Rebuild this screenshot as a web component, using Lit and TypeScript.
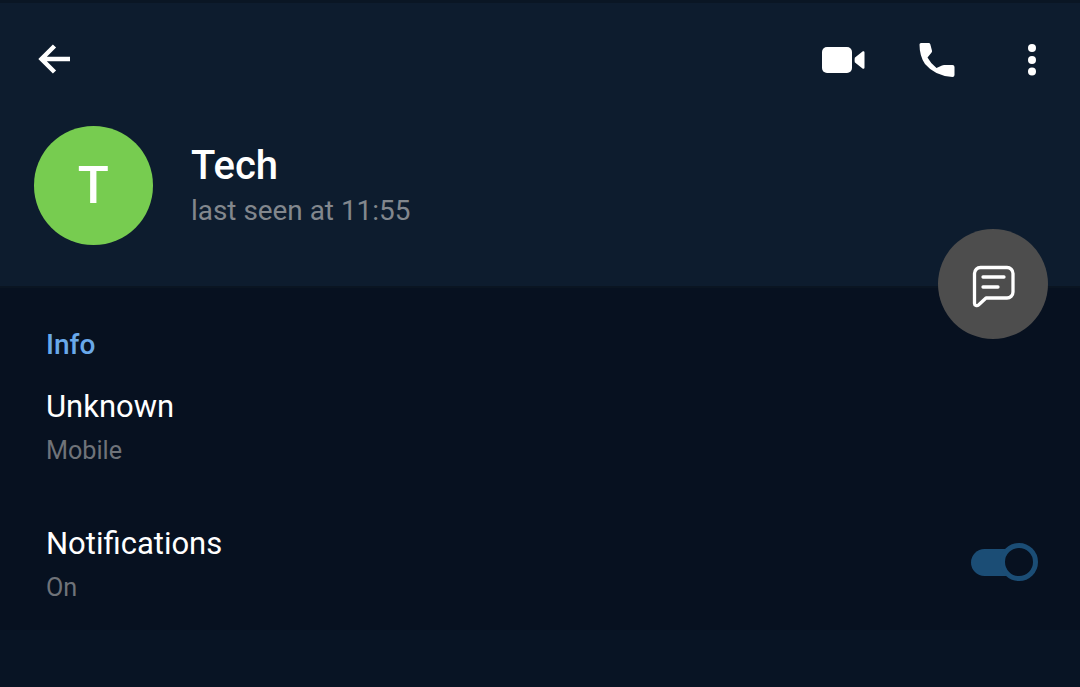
import { LitElement, html, css } from "lit";
import { customElement } from "lit/decorators.js";

@customElement("app-root")
export class AppRoot extends LitElement {
  static styles = css`
    :host { display: block; width: 1080px; height: 687px; overflow: hidden; background: #071120; font-family: Roboto, "Noto Sans", sans-serif; color: #fff; position: relative; }
    * { box-sizing: border-box; }
    .page { display: flex; flex-direction: column; height: 687px; }
    .strip { height: 3px; background: #0a1624; }
    .header { height: 285px; background: #0d1c2e; padding: 0 34px; display: flex; flex-direction: column; border-bottom: 2px solid #0a1522; }
    .toolbar { height: 114px; display: flex; align-items: center; }
    .back { width: 36px; height: 36px; margin-left: 2px; }
    .spacer { flex: 1; }
    .actions { display: flex; align-items: center; }
    .video { width: 44px; height: 28px; }
    .phone { width: 38px; height: 38px; margin-left: 53px; }
    .more { width: 12px; height: 34px; margin-left: 70px; margin-right: 8px; }
    .profile { display: flex; align-items: center; gap: 38.500px; margin-top: 9px; }
    .avatar { width: 118.500px; height: 118.500px; border-radius: 50%; background: #77cc50; display: flex; align-items: center; justify-content: center; font-size: 51px; font-weight: 500; }
    .name { font-size: 40px; font-weight: 500; line-height: 46px; margin-top: 1px; }
    .seen { font-size: 27.900px; line-height: 34px; color: #82878d; margin-top: 5px; }
    .content { height: 342px; padding: 40px 46px 0; background: #071120; }
    .section { font-size: 28px; font-weight: 500; color: #69a9ea; line-height: 34px; }
    .row { display: flex; align-items: center; justify-content: space-between; }
    .title { font-size: 31px; line-height: 38px; }
    .sub { font-size: 25.200px; line-height: 32px; color: #6f7379; margin-top: 9px; }
    .r1 { margin-top: 26px; }
    .r2 { margin-top: 58px; }
    .toggle { position: relative; width: 68px; height: 40px; margin-right: -4px; top: -3px; }
    .track { position: absolute; left: 1px; top: 7px; width: 50px; height: 27px; border-radius: 14px; background: #1b4d75; }
    .knob { position: absolute; right: 0; top: 1px; width: 38px; height: 38px; border-radius: 50%; background: #071120; border: 5px solid #1b4d75; }
    .footer { flex: 1; background: #081424; }
    .fab { position: absolute; left: 938px; top: 229px; width: 110px; height: 110px; border-radius: 50%; background: #4d4d4d; display: flex; align-items: center; justify-content: center; }
    .fab svg { width: 48px; height: 48px; }
  `;

  render() {
    return html`
      <div class="page">
        <div class="strip"></div>
        <div class="header">
          <div class="toolbar">
            <svg class="back" viewBox="0 0 36 36" fill="none" stroke="#fff" stroke-width="4.500"><path d="M34 17H5M18.500 4L5.500 17 18.500 30"/></svg>
            <div class="spacer"></div>
            <div class="actions">
              <svg class="video" viewBox="0 0 44 28" fill="#fff"><rect x="1" y="1" width="30" height="26" rx="5"/><path d="M34 11.500l7.500-6c1-.7 2-.2 2 1v15c0 1.200-1 1.700-2 1l-7.500-6c-.5-.4-.5-4.600 0-5z"/></svg>
              <svg class="phone" viewBox="0 0 38 38" fill="#fff"><path d="M1.500 3.500Q1.500 2 3 2H10.500Q12 2 12.300 3.200L14 9.800Q14.300 11 13.400 11.800L9.500 16.500Q13 23 18.500 27L24 24.500Q25 24 26 24H34.500Q36.500 24 36.500 26V34Q36.500 36 34.500 36Q17 35 7 23Q1.500 15 1.500 3.500z"/></svg>
              <svg class="more" viewBox="0 0 12 34" fill="#fff"><circle cx="6" cy="5" r="4"/><circle cx="6" cy="17" r="4"/><circle cx="6" cy="28.500" r="4"/></svg>
            </div>
          </div>
          <div class="profile">
            <div class="avatar">T</div>
            <div>
              <div class="name">Tech</div>
              <div class="seen">last seen at 11:55</div>
            </div>
          </div>
        </div>
        <div class="content">
          <div class="section">Info</div>
          <div class="r1">
            <div class="title">Unknown</div>
            <div class="sub">Mobile</div>
          </div>
          <div class="row r2">
            <div>
              <div class="title">Notifications</div>
              <div class="sub">On</div>
            </div>
            <div class="toggle"><div class="track"></div><div class="knob"></div></div>
          </div>
        </div>
        <div class="footer"></div>
      </div>
      <div class="fab">
        <svg viewBox="0 0 48 48" fill="none" stroke="#fff" stroke-width="3.300" stroke-linecap="round" stroke-linejoin="round"><path d="M12 7.500H38a6 6 0 0 1 6 6V32a6 6 0 0 1-6 6H17l-7.500 7c-1.500 1.200-4 .5-4-1.500V13.500a6 6 0 0 1 6-6z"/><path d="M14 17h21M14 27h15"/></svg>
      </div>
    `;
  }
}
